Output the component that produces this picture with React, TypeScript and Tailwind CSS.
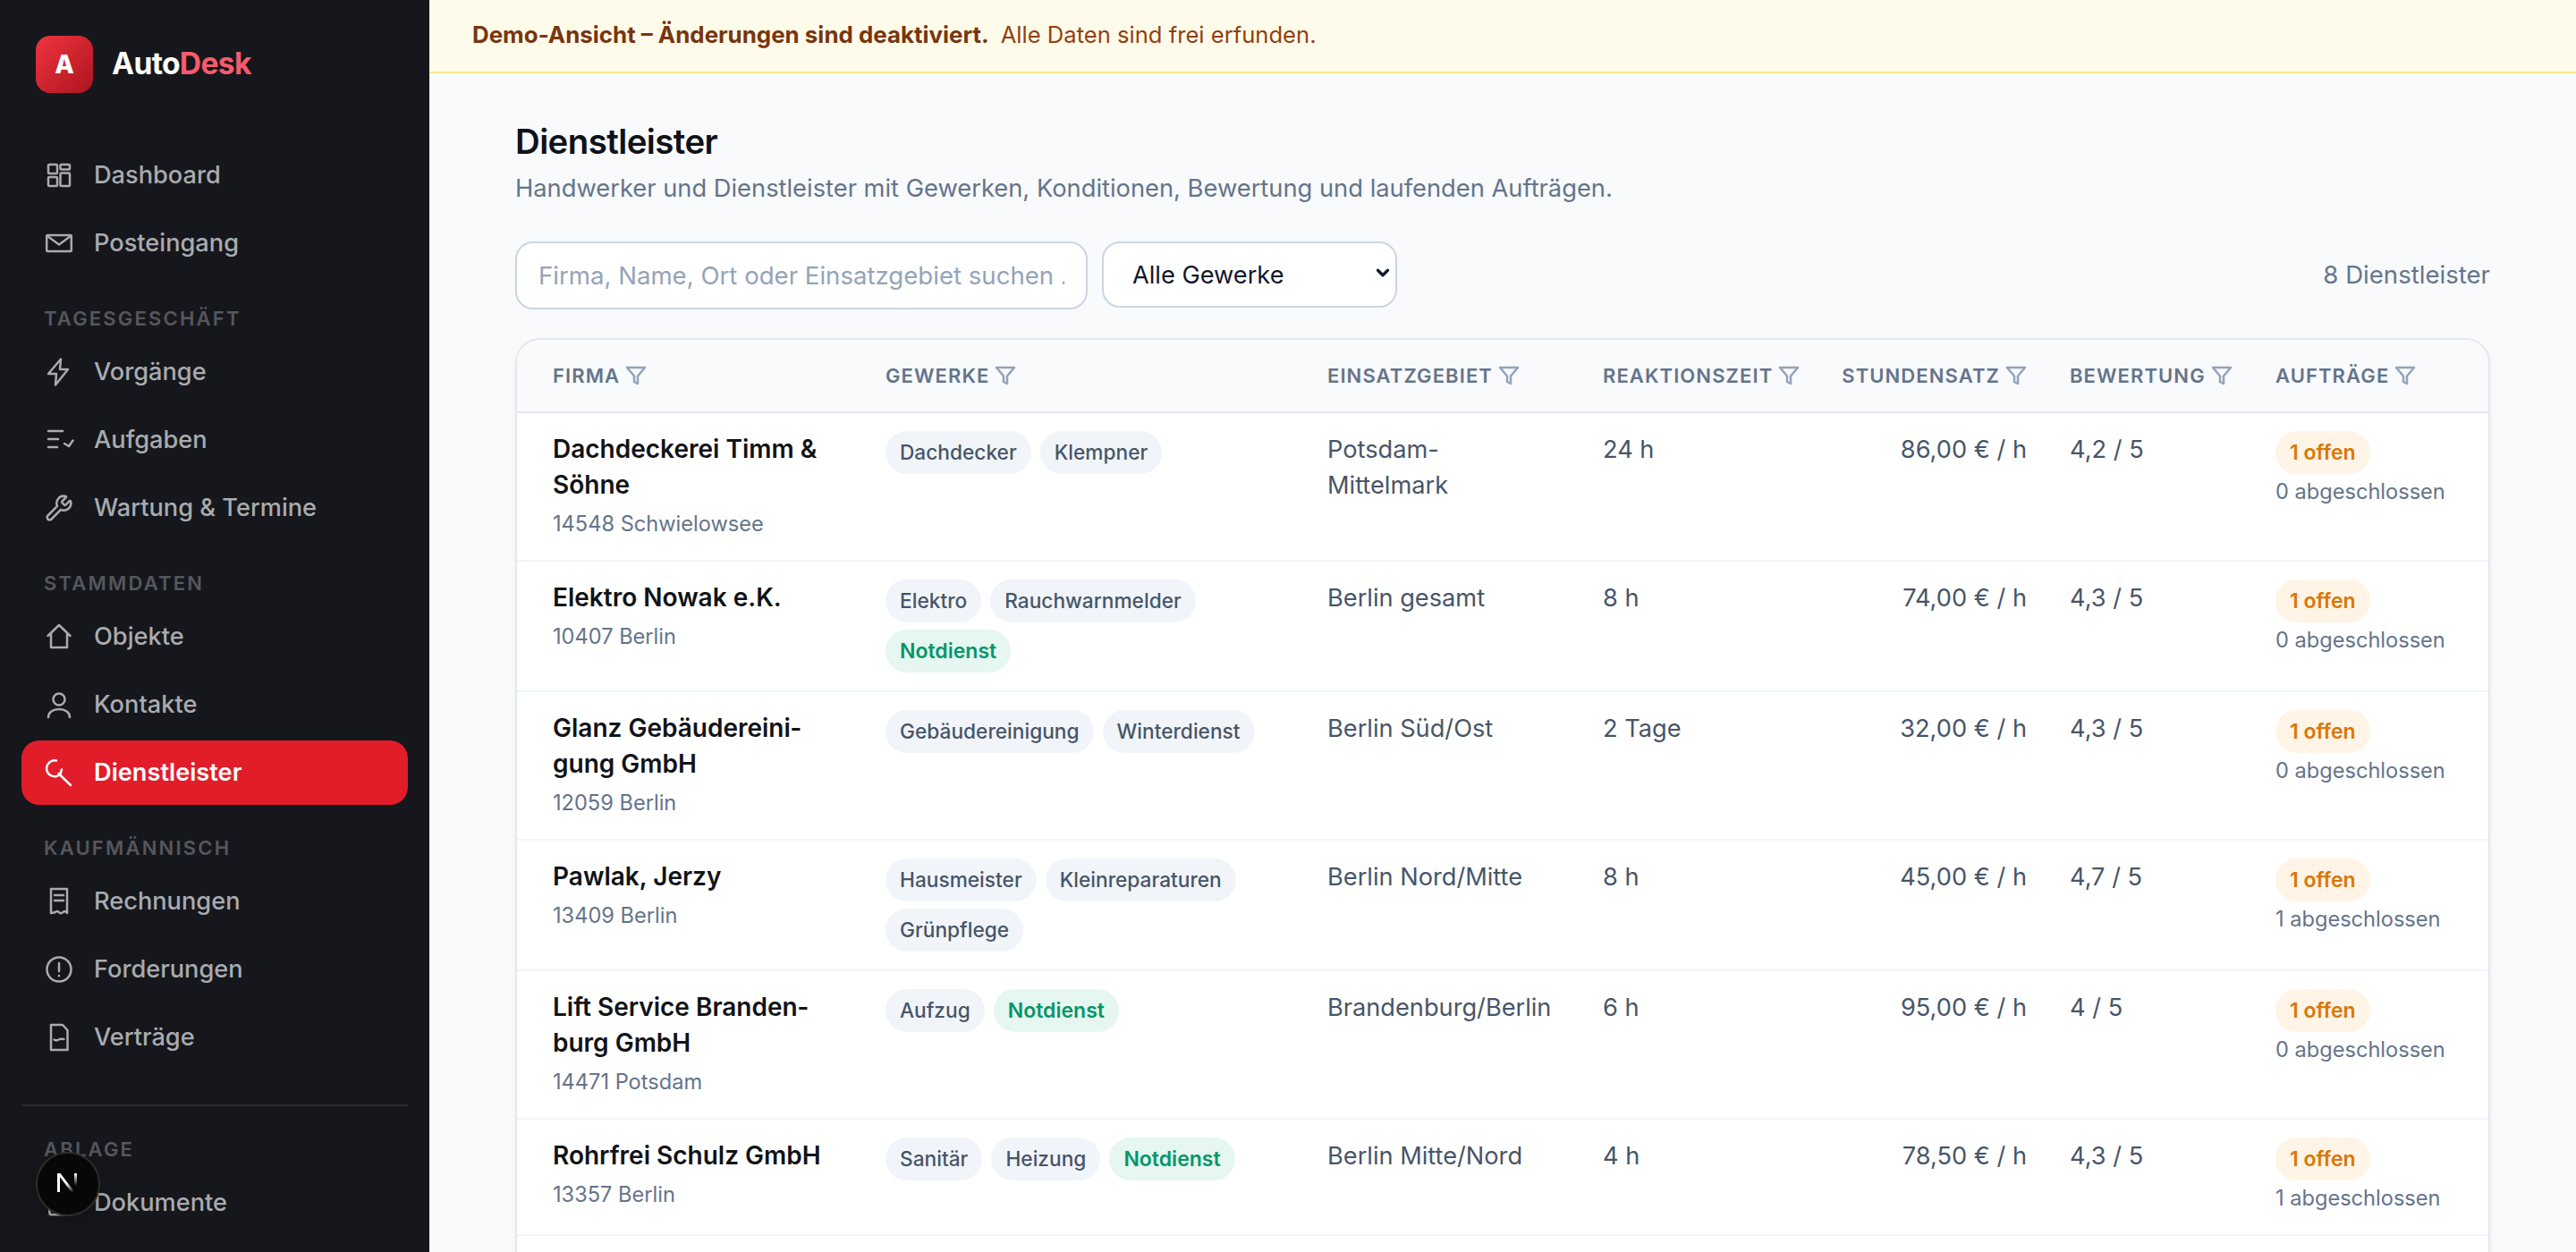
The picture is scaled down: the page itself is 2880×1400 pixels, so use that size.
import { ChevronDown, Wrench, FileText } from "lucide-react";

const iconProps = {
  width: 32,
  height: 32,
  viewBox: "0 0 32 32",
  fill: "none",
  stroke: "currentColor",
  strokeWidth: 2.5,
  strokeLinecap: "round" as const,
  strokeLinejoin: "round" as const,
  className: "shrink-0 overflow-visible",
};

const DashboardIcon = () => (
  <svg {...iconProps}>
    <rect x="4" y="4" width="10" height="10" rx="1" />
    <rect x="17.5" y="4" width="10.5" height="5.5" rx="1" />
    <rect x="4" y="18" width="10" height="10" rx="1" />
    <rect x="17.5" y="13.5" width="10.5" height="14.5" rx="1" />
  </svg>
);
const MailIcon = () => (
  <svg {...iconProps}>
    <rect x="2.2" y="7" width="27.6" height="18" rx="1" />
    <path d="M3 8l13 9.5L29 8" />
  </svg>
);
const BoltIcon = () => (
  <svg {...iconProps}>
    <path d="M18 1.5L4 18h9l-1 12.5L26 13h-9z" />
  </svg>
);
const TasksIcon = () => (
  <svg {...iconProps}>
    <path d="M4 6h16M4 15h11M4 24h10M22 20l5 3 4.5-6.5" />
  </svg>
);
const HouseIcon = () => (
  <svg {...iconProps}>
    <path d="M3.5 15L16 3l12.500 12M7 12.500V28h18V12.500" />
  </svg>
);
const UserIcon = () => (
  <svg {...iconProps}>
    <circle cx="16" cy="10" r="6.500" />
    <path d="M4 30c0-5.500 5-9 12-9s12 3.500 12 9" />
  </svg>
);
const ProviderIcon = () => (
  <svg {...iconProps}>
    <path d="M13 2.500A9 9 0 1 0 18 17M15.500 17L29 30M19 12.500L17.500 17" />
  </svg>
);
const ReceiptIcon = () => (
  <svg {...iconProps}>
    <path d="M7 2h18v27c-2-2.500-3.200-2.500-4.800-.8-1.500 1.500-2.800 1.500-4.200 0-1.500-1.700-3-1.700-4.500 0L7 29zM11 9h10M11 15h10" />
  </svg>
);
const AlertIcon = () => (
  <svg {...iconProps}>
    <circle cx="16" cy="16" r="13.500" />
    <path d="M16 9v9M16 23v.2" />
  </svg>
);
const ContractIcon = () => (
  <svg {...iconProps}>
    <path d="M7 2h13l5.500 6v22H7zM10.500 18.500c2 1.500 3.500 1 5 0s3.500-1 6-.5" />
  </svg>
);
const FilterIcon = () => (
  <svg width="24" height="24" viewBox="0 0 24 24" fill="none" stroke="#94a3b8" strokeWidth="2.500" strokeLinejoin="round" className="shrink-0">
    <path d="M22 3H2l8 9.460V19l4 2v-8.540z" />
  </svg>
);

const NavItem = ({ icon, label, active }: { icon: React.ReactNode; label: string; active?: boolean }) => (
  <a
    className={
      active
        ? "flex h-[72px] items-center gap-[23px] rounded-[20px] bg-[#e11d2a] pl-[26px] text-[27.2px] font-semibold text-white"
        : "flex h-[72px] items-center gap-[23px] rounded-[20px] pl-[26px] text-[27.2px] font-medium text-[#a9abaf]"
    }
  >
    {icon}
    <span>{label}</span>
  </a>
);

const SectionLabel = ({ children }: { children: string }) => (
  <div className="mb-[9px] mt-[33px] h-[30px] pl-[25px] text-[22px] font-semibold uppercase leading-[30px] tracking-[0.1em] text-[#55575c]">
    {children}
  </div>
);

const Sidebar = () => (
  <aside className="relative h-full w-[480px] shrink-0 overflow-hidden bg-[#15171c] px-[24px]">
    <div className="flex h-[160px] items-start pl-[16px] pt-[40px]">
      <div className="flex h-[64px] w-[64px] items-center justify-center rounded-[16px] bg-gradient-to-br from-[#f0343f] to-[#ad141f] text-[28px] font-extrabold text-white">
        A
      </div>
      <div className="ml-[21px] mt-[8px] text-[33.6px] font-bold leading-[46px] tracking-[-0.02em] text-white">
        Auto<span className="text-[#f65b6d]">Desk</span>
      </div>
    </div>
    <nav className="flex flex-col">
      <div className="flex flex-col gap-[4px]">
        <NavItem icon={<DashboardIcon />} label="Dashboard" />
        <NavItem icon={<MailIcon />} label="Posteingang" />
      </div>
      <SectionLabel>Tagesgeschäft</SectionLabel>
      <div className="flex flex-col gap-[4px]">
        <NavItem icon={<BoltIcon />} label="Vorgänge" />
        <NavItem icon={<TasksIcon />} label="Aufgaben" />
        <NavItem icon={<Wrench size={32} strokeWidth={1.9} className="shrink-0" />} label="Wartung & Termine" />
      </div>
      <SectionLabel>Stammdaten</SectionLabel>
      <div className="flex flex-col gap-[4px]">
        <NavItem icon={<HouseIcon />} label="Objekte" />
        <NavItem icon={<UserIcon />} label="Kontakte" />
        <NavItem icon={<ProviderIcon />} label="Dienstleister" active />
      </div>
      <SectionLabel>Kaufmännisch</SectionLabel>
      <div className="flex flex-col gap-[4px]">
        <NavItem icon={<ReceiptIcon />} label="Rechnungen" />
        <NavItem icon={<AlertIcon />} label="Forderungen" />
        <NavItem icon={<ContractIcon />} label="Verträge" />
      </div>
      <div className="mt-[39px] h-[2px] bg-[#2a2c31]" />
      <SectionLabel>Ablage</SectionLabel>
      <NavItem icon={<FileText size={32} strokeWidth={1.9} className="shrink-0" />} label="Dokumente" />
    </nav>

    {/* next dev badge */}
    <div className="absolute left-[40px] top-[1288px] flex h-[72px] w-[72px] items-center justify-center rounded-full border-2 border-[#2c2c2a] bg-[#060807] shadow-[0_8px_24px_rgba(0,0,0,0.2)]">
      <svg width="30" height="30" viewBox="0 0 30 30" fill="none">
        <defs>
          <linearGradient id="nfade" x1="0" y1="0" x2="0.4" y2="1">
            <stop offset="0.55" stopColor="#fff" />
            <stop offset="1" stopColor="#fff" stopOpacity="0" />
          </linearGradient>
          <linearGradient id="nbar" x1="0" y1="0" x2="0" y2="1">
            <stop offset="0" stopColor="#fff" />
            <stop offset="0.7" stopColor="#fff" stopOpacity="0" />
          </linearGradient>
        </defs>
        <path d="M3 3h3v21H3z" fill="#fff" />
        <path d="M3 3h3.500l19 25h-3.800z" fill="url(#nfade)" />
        <path d="M22 3h3v20h-3z" fill="url(#nbar)" />
      </svg>
    </div>
  </aside>
);

type Row = {
  name: string;
  place: string;
  trades: string[];
  area: string;
  reaction: string;
  rate: string;
  rating: string;
  done: number;
  emergency?: boolean;
};

const ROWS: Row[] = [
  { name: "Dachdeckerei Timm & Söhne", place: "14548 Schwielowsee", trades: ["Dachdecker", "Klempner"], area: "Potsdam-Mittelmark", reaction: "24 h", rate: "86,00 € / h", rating: "4,2 / 5", done: 0 },
  { name: "Elektro Nowak e.K.", place: "10407 Berlin", trades: ["Elektro", "Rauchwarnmelder"], emergency: true, area: "Berlin gesamt", reaction: "8 h", rate: "74,00 € / h", rating: "4,3 / 5", done: 0 },
  { name: "Glanz Gebäudereini\u00ADgung GmbH", place: "12059 Berlin", trades: ["Gebäudereinigung", "Winterdienst"], area: "Berlin Süd/Ost", reaction: "2 Tage", rate: "32,00 € / h", rating: "4,3 / 5", done: 0 },
  { name: "Pawlak, Jerzy", place: "13409 Berlin", trades: ["Hausmeister", "Kleinreparaturen", "Grünpflege"], area: "Berlin Nord/Mitte", reaction: "8 h", rate: "45,00 € / h", rating: "4,7 / 5", done: 1 },
  { name: "Lift Service Branden\u00ADburg GmbH", place: "14471 Potsdam", trades: ["Aufzug"], emergency: true, area: "Brandenburg/Berlin", reaction: "6 h", rate: "95,00 € / h", rating: "4 / 5", done: 0 },
  { name: "Rohrfrei Schulz GmbH", place: "13357 Berlin", trades: ["Sanitär", "Heizung"], emergency: true, area: "Berlin Mitte/Nord", reaction: "4 h", rate: "78,50 € / h", rating: "4,3 / 5", done: 1 },
];

const HEADERS = ["Firma", "Gewerke", "Einsatzgebiet", "Reaktionszeit", "Stundensatz", "Bewertung", "Aufträge"];

const Chip = ({ children, className }: { children: string; className: string }) => (
  <span className={`inline-flex h-[48px] items-center rounded-full px-[16px] font-medium ${className}`}>
    {children}
  </span>
);

const Table = () => (
  <div className="mt-[32px] overflow-hidden rounded-[28px] border-2 border-[#e2e8f0] bg-white shadow-[0_2px_6px_rgba(15,23,42,0.04)]">
    <table className="w-full table-fixed">
      <colgroup>
        <col className="w-[388px]" />
        <col className="w-[494px]" />
        <col className="w-[308px]" />
        <col className="w-[267px]" />
        <col className="w-[255px]" />
        <col className="w-[230px]" />
        <col className="w-[262px]" />
      </colgroup>
      <thead>
        <tr className="h-[81px] border-b-2 border-[#e2e8f0] bg-[#f8fafc]">
          {HEADERS.map((h, i) => (
            <th
              key={h}
              className={`whitespace-nowrap px-[24px] align-middle text-[22px] font-semibold uppercase tracking-[0.05em] text-[#64748b] ${i === 0 ? "pl-[40px] text-left" : i === 4 ? "text-right" : "text-left"}`}
            >
              <span className={`inline-flex items-center gap-[6px] ${i === 4 ? "justify-end" : ""}`}>
                {h}
                <FilterIcon />
              </span>
            </th>
          ))}
        </tr>
      </thead>
      <tbody>
        {ROWS.map((r) => (
          <tr key={r.name} className="border-b-2 border-[#f1f5f9]">
            <td className="py-[20px] pl-[40px] pr-[24px] align-top">
              <div className="text-[28px] font-semibold leading-[40px] text-[#111318]">{r.name}</div>
              <div className="mt-[4px] text-[23.6px] leading-[40px] text-[#64748b]">{r.place}</div>
            </td>
            <td className="px-[24px] py-[20px] align-top">
              <div className="flex flex-wrap gap-x-[10px] gap-y-[8px]">
                {r.trades.map((t) => (
                  <Chip key={t} className="bg-[#f1f5f9] text-[22.7px] text-[#475569]">{t}</Chip>
                ))}
                {r.emergency && <Chip className="bg-[#e6f6f0] text-[23px] font-semibold text-[#059669]">Notdienst</Chip>}
              </div>
            </td>
            <td className="pb-[19px] pl-[24px] pr-[32px] pt-[21px] align-top text-[27.2px] leading-[40px] text-[#475569]">{r.area}</td>
            <td className="px-[24px] pb-[19px] pt-[21px] align-top text-[27.2px] leading-[40px] text-[#475569]">{r.reaction}</td>
            <td className="px-[24px] pb-[19px] pt-[21px] text-right align-top text-[27.2px] leading-[40px] text-[#475569]">{r.rate}</td>
            <td className="px-[24px] pb-[19px] pt-[21px] align-top text-[27.2px] leading-[40px] text-[#475569]">{r.rating}</td>
            <td className="px-[24px] py-[20px] align-top">
              <Chip className="bg-[#fff4e5] text-[23px] font-semibold text-[#d97706]">1 offen</Chip>
              <div className="text-[23.6px] leading-[40px] text-[#64748b]">{r.done} abgeschlossen</div>
            </td>
          </tr>
        ))}
        <tr className="h-[130px]">
          <td colSpan={7} />
        </tr>
      </tbody>
    </table>
  </div>
);

export default function App() {
  return (
    <div className="flex h-screen overflow-hidden bg-[#f8fafc] font-['Inter',sans-serif]">
      <Sidebar />
      <main className="min-w-0 flex-1 overflow-hidden">
        <div className="flex h-[82px] items-center gap-[13px] border-b-2 border-[#fde68a] bg-[#fffbeb] pb-[2px] pl-[48px] text-[25.6px]">
          <strong className="text-[25.9px] font-bold text-[#78350f]">Demo-Ansicht – Änderungen sind deaktiviert.</strong>
          <span className="text-[#92400e]">Alle Daten sind frei erfunden.</span>
        </div>
        <div className="px-[96px] pt-[48px]">
          <h1 className="text-[38.4px] font-semibold leading-[56px] tracking-[-0.015em] text-[#0f1218]">Dienstleister</h1>
          <p className="mt-[5px] text-[27.3px] leading-[40px] text-[#64748b]">
            Handwerker und Dienstleister mit Gewerken, Konditionen, Bewertung und laufenden Aufträgen.
          </p>
          <div className="mt-[39px] flex items-start gap-[16px]">
            <input
              className="h-[76px] w-[640px] rounded-[20px] border-2 border-[#cbd5e1] bg-white px-[24px] text-[27.6px] text-[#0f172a] placeholder:text-[#94a3b8]"
              placeholder="Firma, Name, Ort oder Einsatzgebiet suchen …"
            />
            <div className="relative h-[74px] w-[330px]">
              <select className="h-full w-full appearance-none rounded-[20px] border-2 border-[#cbd5e1] bg-white pl-[32px] pt-[2px] text-[27.2px] text-[#0f172a]">
                <option>Alle Gewerke</option>
              </select>
              <ChevronDown size={22} strokeWidth={3.5} className="pointer-events-none absolute right-[5px] top-[24px] text-[#0f172a]" />
            </div>
            <div className="ml-auto self-center text-[27.6px] text-[#64748b]">8 Dienstleister</div>
          </div>
          <Table />
        </div>
      </main>
    </div>
  );
}
